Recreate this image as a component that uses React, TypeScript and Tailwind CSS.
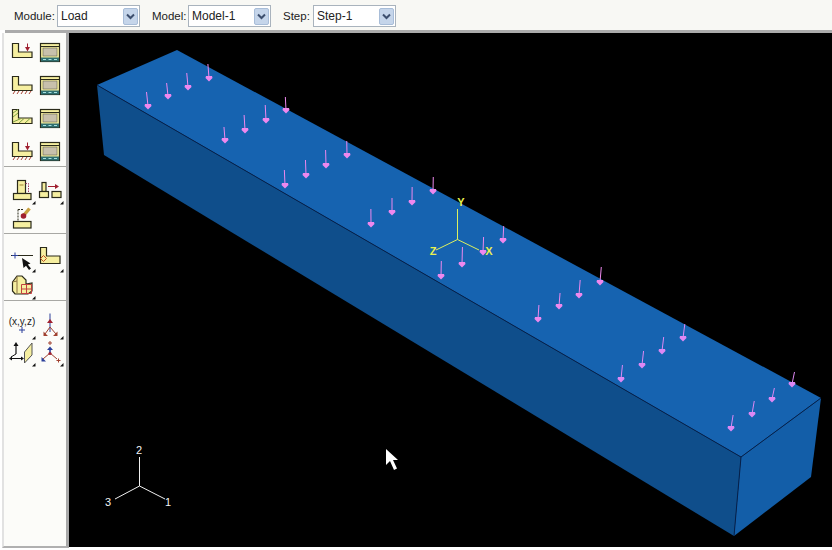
import React from "react";

const Y = "#f6efa0";
const K = "#2a2a1a";
const R = "#a02030";
const B = "#2b3f9a";

function Combo({ value, width }: { value: string; width: string }) {
  return (
    <div className={`${width} h-[22px] bg-white border border-[#a9b3bd] flex items-center justify-between pl-[2px] pr-[1px]`}>
      <span className="text-[12px] text-[#222] pl-[1px]">{value}</span>
      <div className="w-[15px] h-[17px] rounded-[2px] border border-[#a8bdd8] bg-[#c5d5ea] flex items-center justify-center">
        <svg width="9" height="7" viewBox="0 0 9 7">
          <path d="M1 1.5 L4.5 5 L8 1.5" fill="none" stroke="#3d4f6e" strokeWidth="2" />
        </svg>
      </div>
    </div>
  );
}

function Ico({ children, tri }: { children: React.ReactNode; tri?: boolean }) {
  return (
    <svg width="28" height="28" viewBox="0 0 28 28" className="block">
      {children}
      {tri && <path d="M27.5 24V27.5H24Z" fill="#111" />}
    </svg>
  );
}

const LShape = ({ fill = Y }: { fill?: string }) => (
  <path d="M4.5 6.5H10.5V15H24V20.5H4.5Z" fill={fill} stroke={K} strokeWidth="1.2" />
);
const Hatch = () => (
  <path d="M5 24L7 21M9 24L11 21M13 24L15 21M17 24L19 21M21 24L23 21" stroke="#a03020" strokeWidth="0.9" fill="none" />
);
const DownArrow = () => (
  <g>
    <path d="M19.5 6.5V12" stroke={R} strokeWidth="1" />
    <path d="M17 10L19.5 14.5L22 10Z" fill={R} />
  </g>
);
const Screen = () => (
  <g>
    <rect x="4.5" y="6.5" width="19" height="18" fill={Y} stroke={K} strokeWidth="1.2" />
    <path d="M5 9.5H23" stroke={K} />
    <rect x="7" y="11" width="14" height="8" fill="#c8c0ac" stroke="#6a6650" strokeWidth="0.6" />
    <rect x="5" y="20.5" width="18" height="4" fill="#2f6f70" />
    <path d="M7 22.5H10M12.5 22.5H15.5M18 22.5H21" stroke="#a8e0e0" strokeWidth="1" />
  </g>
);

const icons: React.ReactNode[][] = [
  [
    <Ico key="a"><LShape /><DownArrow /></Ico>,
    <Ico key="b"><Screen /></Ico>,
    <Ico key="c"><LShape /><Hatch /></Ico>,
    <Ico key="d"><Screen /></Ico>,
    <Ico key="e">
      <LShape />
      <path d="M5 10L10 6.5M5 14L10 10M5 19L13 15.5M11 20L16 15.5M17 20L22 15.5" stroke="#7aa040" strokeWidth="1" fill="none" />
    </Ico>,
    <Ico key="f"><Screen /></Ico>,
    <Ico key="g"><LShape /><DownArrow /><Hatch /></Ico>,
    <Ico key="h"><Screen /></Ico>,
  ],
  [
    <Ico key="a" tri>
      <rect x="9.5" y="3.5" width="8" height="13" fill={Y} stroke={K} strokeWidth="1.2" />
      <path d="M17.5 6.5H20.5V16.5" fill="none" stroke="#a04060" strokeDasharray="1.5 1" />
      <path d="M11.5 8H15.5" stroke="#a08030" />
      <rect x="5.5" y="16.5" width="17.5" height="6" fill={Y} stroke={K} strokeWidth="1.2" />
    </Ico>,
    <Ico key="b" tri>
      <rect x="6" y="5.5" width="4" height="9" fill={Y} stroke={K} strokeWidth="1.2" />
      <rect x="3.5" y="14.5" width="9" height="6" fill={Y} stroke={K} strokeWidth="1.2" />
      <rect x="16" y="14.5" width="9" height="6" fill={Y} stroke={K} strokeWidth="1.2" />
      <path d="M12 9.5H20" stroke={R} />
      <path d="M19 7L23 9.5L19 12Z" fill={R} />
    </Ico>,
    <Ico key="c">
      <rect x="5.5" y="17.5" width="17.5" height="6.5" fill={Y} stroke={K} strokeWidth="1.2" />
      <path d="M10 5.5H15M10 5.5V17" stroke={K} strokeDasharray="2 1" fill="none" />
      <path d="M16 11L21.5 4.5" stroke="#c8a040" strokeWidth="3.4" />
      <circle cx="15.5" cy="12" r="2.8" fill="#a02030" />
    </Ico>,
    <div key="blank" />,
  ],
  [
    <Ico key="a" tri>
      <path d="M3 10.5H25" stroke={K} />
      <path d="M7 7.5V13.5M4 10.5H10" stroke={B} />
      <path d="M14 13L22.5 18.5L19.8 19.5L23 23.5L21 25L18 20.8L15.5 23Z" fill="#111" />
    </Ico>,
    <Ico key="b" tri>
      <path d="M4.5 2.5H10.5V11H24V18.5H4.5Z" fill={Y} stroke={K} strokeWidth="1.2" />
      <path d="M7.5 10.5L10.5 13.5L7.5 16.5L4.5 13.5Z" fill="none" stroke="#c05020" />
    </Ico>,
    <Ico key="c" tri>
      <path d="M4.5 10L9 4H14L18 8V12L24 11V19L20 22H7L4.5 19Z" fill={Y} stroke={K} strokeWidth="1.2" />
      <path d="M9 4.5V21M4.5 10L9 9" stroke="#8a7040" fill="none" />
      <path d="M13.5 12.5H23.5V21.5H13.5ZM18.5 12.5V21.5M13.5 17H23.5" fill="none" stroke="#c04040" />
    </Ico>,
    <div key="blank" />,
  ],
  [
    <Ico key="a" tri>
      <text x="14" y="13" textAnchor="middle" fontSize="10" fontFamily="'Liberation Sans', sans-serif" fill="#222">(x,y,z)</text>
      <path d="M14 15V21M11 18H17" stroke={B} />
    </Ico>,
    <Ico key="b" tri>
      <path d="M14 1.5V20" stroke={B} />
      <path d="M14 15L9 22M14 15L20 22" stroke="#a04030" />
      <path d="M11 11L14 7L17 11Z" fill={R} />
      <path d="M7.5 19.5V24H12ZM21.5 19.5V24H17Z" fill="#a04030" />
    </Ico>,
    <Ico key="c" tri>
      <path d="M8 6V15M3 19.5H14" stroke="#111" fill="none" strokeWidth="1.2" />
      <path d="M8 15L3 18" stroke="#111" />
      <path d="M5.5 7L8 3L10.5 7ZM4 17.5V21.5L1 19.5ZM13 17.5V21.5L16 19.5Z" fill="#111" />
      <path d="M16.5 13L24 4V16L16.5 24Z" fill={Y} stroke="#555" />
    </Ico>,
    <Ico key="d" tri>
      <path d="M14 2V6M12 4H16" stroke="#a04030" />
      <path d="M14 9V15" stroke={B} strokeWidth="1.6" />
      <path d="M11 11L14 7.5L17 11Z" fill={B} />
      <path d="M14 14L7 20M14 14L21 20" stroke="#a04030" />
      <path d="M5.5 18V22.5H10Z" fill={B} />
      <path d="M22.5 19.5V23.5M20.5 21.5H24.5" stroke="#a04030" />
      <circle cx="14" cy="14.5" r="1.6" fill={R} />
    </Ico>,
  ],
];

const arrows: number[][] = [
  [148,92,106],[168,83,96],[188,73,87],[209,64,78],
  [225,127,140],[245,115,130],[266,105,120],[286,97,110],
  [285,170,185],[306,160,175],[326,150,165],[347,141,155],
  [371,209,224],[392,198,212],[412,187,202],[433,177,191],
  [441,261,276],[462,247,264],[483,237,252],[503,226,240],
  [538,305,319],[559,293,306],[579,280,295],[600,267,282],
  [621,365,379],[642,351,365],[662,337,351],[683,324,338],
  [731,415,428],[752,401,414],[772,388,399],[792,372,384],
];

export default function App() {
  return (
    <div className="w-[832px] h-[550px] flex flex-col bg-white overflow-hidden font-['Liberation_Sans',Arial,sans-serif]">
      <div className="h-[30px] shrink-0 bg-[#f8f8f4] flex items-start pt-[5px] text-[11.5px] text-[#222]">
        <span className="ml-[14px] w-[43px] leading-[22px]">Module:</span>
        <Combo value="Load" width="w-[83px]" />
        <span className="ml-[12px] w-[36px] leading-[22px]">Model:</span>
        <Combo value="Model-1" width="w-[83px]" />
        <span className="ml-[12px] w-[30px] leading-[22px]">Step:</span>
        <Combo value="Step-1" width="w-[83px]" />
      </div>
      <div className="h-[3px] shrink-0 ml-[5px] bg-[#ababab]" />
      <div className="h-[515px] shrink-0 flex">
        <div className="w-[67px] ml-[2px] shrink-0 bg-[#fcfcf9] border-l-2 border-l-[#e2e2e2] border-r-[3px] border-r-[#a8a8a8] border-b-2 border-b-[#b0b0b0] flex flex-col">
          <div className="h-[134px] pt-px border-b border-[#a8a8a4] grid grid-cols-[28px_28px] auto-rows-[33px] content-start items-center pl-1">
            {icons[0]}
          </div>
          <div className="h-[67px] pt-[10px] border-b border-[#a8a8a4] grid grid-cols-[28px_28px] auto-rows-[27px] content-start items-center pl-1">
            {icons[1]}
          </div>
          <div className="h-[67px] pt-[11px] border-b border-[#a8a8a4] grid grid-cols-[28px_28px] auto-rows-[27px] content-start items-center pl-1">
            {icons[2]}
          </div>
          <div className="pt-[11px] grid grid-cols-[28px_28px] auto-rows-[27px] content-start items-center pl-1">
            {icons[3]}
          </div>
        </div>
        <div className="flex-1 min-w-0">
          <div className="h-[514px] bg-black">
            <svg width="763" height="514" viewBox="69 33 763 514" className="block">
              <polygon points="97,85 177,50 821,398 741,457" fill="#1663b0" />
              <polygon points="97,85 741,457 734,536 104,155" fill="#0f4e8b" />
              <polygon points="741,457 821,398 811,477 734,536" fill="#135ea8" />
              <path d="M97 85L741 457L821 398M741 457L734 536" fill="none" stroke="#07204a" strokeWidth="1" />
              {arrows.map(([x, a, b]) => {
                const dx = -1.5 + ((x - 148) / 644) * 4;
                const color = x > 600 ? "#dd88f4" : "#ee88ee";
                return (
                  <g key={`${x}-${a}`}>
                    <path d={`M${x + dx} ${a}L${x} ${b}`} stroke={color} strokeWidth="1" />
                    <path d={`M${x - 3} ${b - 2}H${x + 3}L${x + 3.5} ${b}L${x} ${b + 3.5}L${x - 3.5} ${b}Z`} fill={color} />
                  </g>
                );
              })}
              <path d="M457.5 209V239.5L436 250M457.5 239.5L479 250" fill="none" stroke="#dcf060" strokeWidth="1" />
              <g fontFamily="'Liberation Sans', sans-serif" fontSize="11" fontWeight="700" fill="#e8f050" textAnchor="middle">
                <text x="461" y="205.5">Y</text>
                <text x="433" y="254.5">Z</text>
                <text x="489" y="254.5">X</text>
              </g>
              <path d="M139.5 457V486L115 499M139.5 486L165 499" fill="none" stroke="#f0f0f0" strokeWidth="1" />
              <g fontFamily="'Liberation Sans', sans-serif" fontSize="11" fill="#f4f4f4" textAnchor="middle">
                <text x="139" y="454">2</text>
                <text x="108" y="506">3</text>
                <text x="168" y="506">1</text>
              </g>
              <path d="M386 449V465L390 461L394 470L397 468.5L393 460L398 460Z" fill="#fff" />
            </svg>
          </div>
        </div>
      </div>
    </div>
  );
}
